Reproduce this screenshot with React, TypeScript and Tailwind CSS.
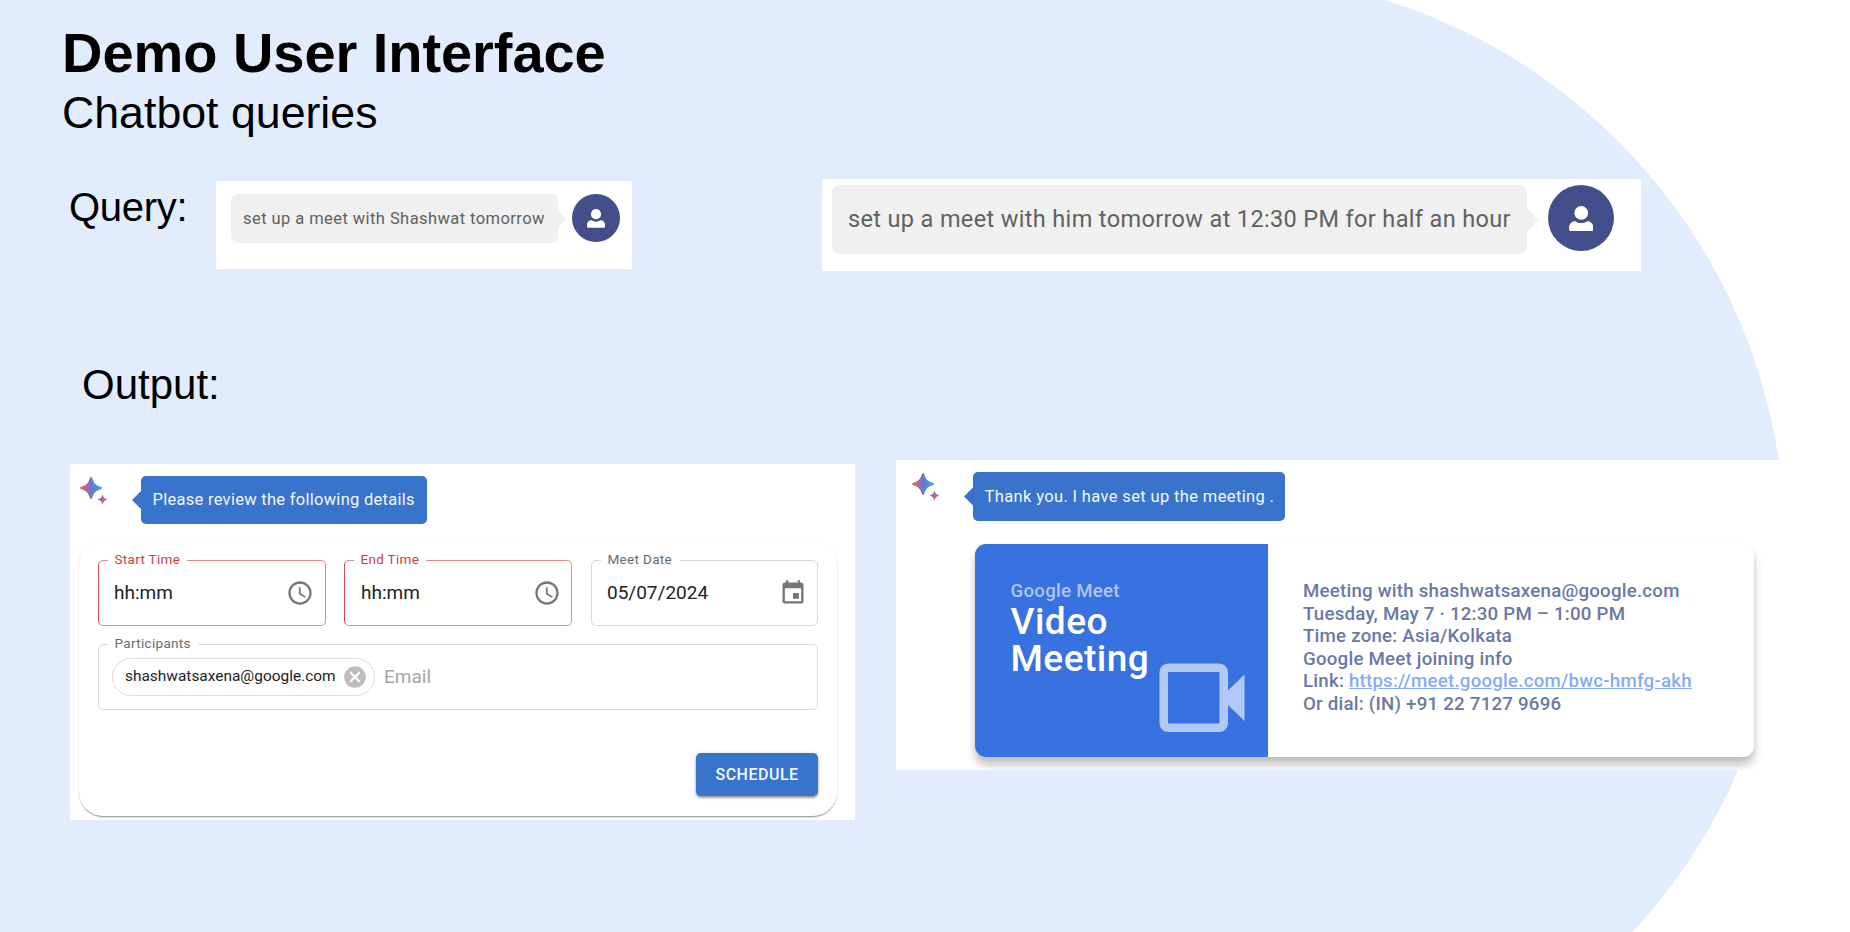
import type { ReactNode } from "react";

function Sparkle({ className, id }: { className: string; id: string }) {
  return (
    <svg className={className} width="28" height="28" viewBox="0 0 28 28" fill="none">
      <defs>
        <linearGradient id={`${id}-a`} x1="0" y1="11" x2="22" y2="11" gradientUnits="userSpaceOnUse">
          <stop offset="0" stopColor="#e5784f" />
          <stop offset="0.3" stopColor="#b0659c" />
          <stop offset="0.55" stopColor="#5c7fd0" />
          <stop offset="1" stopColor="#45a6e8" />
        </linearGradient>
        <linearGradient id={`${id}-b`} x1="17" y1="20" x2="28" y2="26" gradientUnits="userSpaceOnUse">
          <stop offset="0" stopColor="#6d78cf" />
          <stop offset="0.45" stopColor="#b0659c" />
          <stop offset="1" stopColor="#e0714f" />
        </linearGradient>
      </defs>
      <path
        d="M11 0c.9 0 1.1.7 1.5 1.9 1.300 4.200 3.400 6.300 7.600 7.600 1.200.4 1.900.6 1.900 1.500s-.7 1.100-1.900 1.500c-4.200 1.300-6.300 3.400-7.600 7.600-.4 1.200-.6 1.900-1.500 1.900s-1.100-.7-1.500-1.900c-1.300-4.200-3.400-6.300-7.600-7.600C.7 12.100 0 11.900 0 11s.7-1.100 1.900-1.500c4.200-1.300 6.300-3.400 7.600-7.600C9.900.7 10.100 0 11 0z"
        fill={`url(#${id}-a)`}
      />
      <path
        d="M22.500 17.200c.7 2.900 1.700 4.300 5.300 5.300-3.600 1-4.600 2.400-5.300 5.300-.7-2.900-1.700-4.300-5.300-5.300 3.600-1 4.600-2.400 5.300-5.300z"
        fill={`url(#${id}-b)`}
      />
    </svg>
  );
}

function UserIcon({ className }: { className: string }) {
  return (
    <svg className={className} viewBox="0 0 18 19" fill="#ffffff">
      <circle cx="9" cy="5.150" r="5.100" />
      <path d="M4.500 11.300c1.300.9 2.700 1.400 4.500 1.400s3.200-.5 4.500-1.400c2.700 0 4.500 2 4.500 4.700v1.500c0 .7-.5 1.200-1.200 1.200H1.200C.5 18.700 0 18.200 0 17.500V16c0-2.700 1.800-4.700 4.500-4.700z" />
    </svg>
  );
}

function ClockIcon() {
  return (
    <svg className="size-7 shrink-0" viewBox="0 0 24 24" fill="#757575">
      <path d="M11.990 2C6.470 2 2 6.480 2 12s4.470 10 9.990 10C17.520 22 22 17.520 22 12S17.520 2 11.990 2zM12 20c-4.420 0-8-3.580-8-8s3.580-8 8-8 8 3.580 8 8-3.580 8-8 8z" />
      <path d="M12.500 7H11v6l5.250 3.150.75-1.230-4.500-2.670z" />
    </svg>
  );
}

function CalendarIcon() {
  return (
    <svg className="size-7 shrink-0" viewBox="0 0 24 24" fill="#757575">
      <path d="M17 12h-5v5h5v-5zM16 1v2H8V1H6v2H5c-1.110 0-1.990.9-1.990 2L3 19c0 1.100.89 2 2 2h14c1.100 0 2-.9 2-2V5c0-1.100-.9-2-2-2h-1V1h-2zm3 18H5V8h14v11z" />
    </svg>
  );
}

function CancelIcon() {
  return (
    <svg className="size-[26px] shrink-0" viewBox="0 0 24 24" fill="#bdbdbd">
      <path d="M12 2C6.470 2 2 6.470 2 12s4.470 10 10 10 10-4.470 10-10S17.530 2 12 2zm5 13.590L15.590 17 12 13.410 8.410 17 7 15.590 10.590 12 7 8.410 8.410 7 12 10.590 15.590 7 17 8.410 13.410 12 17 15.590z" />
    </svg>
  );
}

function VideocamIcon() {
  return (
    <svg className="absolute left-[184px] top-[119px]" width="86" height="70" viewBox="0 0 86 70">
      <rect x="4.750" y="4.750" width="60" height="60" rx="4.500" fill="none" stroke="#b2c8f6" strokeWidth="8.500" />
      <path d="M69 27.500 85.500 11.500V58L69 42z" fill="#b2c8f6" />
    </svg>
  );
}

function Field({
  className,
  label,
  labelClass,
  children,
}: {
  className: string;
  label: string;
  labelClass: string;
  children: ReactNode;
}) {
  return (
    <div className={`relative flex h-[66px] items-center rounded-[5px] border ${className}`}>
      <span
        className={`absolute -top-[10px] left-[9px] bg-white pl-[6.500px] text-[13.500px] leading-4 tracking-[0.32px] whitespace-nowrap ${labelClass}`}
      >
        {label}
      </span>
      {children}
    </div>
  );
}

function ReplyBubble({ className, children }: { className: string; children: ReactNode }) {
  return (
    <div className="flex items-center">
      <div className="h-[18px] w-[9px] bg-[#3873cc] [clip-path:polygon(100%_0,100%_100%,0_50%)]" />
      <div
        className={`flex items-center rounded-[5px] bg-[#3873cc] pt-px pl-[11.500px] text-[16.500px] whitespace-nowrap text-[#f3f7fd] ${className}`}
      >
        {children}
      </div>
    </div>
  );
}

export default function App() {
  return (
    <div className="relative h-[932px] w-[1850px] overflow-hidden bg-white font-['Roboto',sans-serif]">
      <div className="absolute -top-[26px] left-0 h-[1140px] w-[1785px] rounded-r-full bg-[#e1edfc]" />

      <main className="relative flex h-full flex-col">
        <header className="flex h-[179px] flex-col pt-[21px] pl-[62px] font-['Liberation_Sans',Arial,sans-serif] text-black">
          <h1 className="text-[56px] leading-16 font-bold tracking-[-0.05px]">Demo User Interface</h1>
          <p className="mt-[2px] text-[44.700px] leading-[52px]">Chatbot queries</p>
        </header>

        <section className="flex h-[181px] items-start pl-[69px]">
          <h2 className="w-[147px] pt-[4px] font-['Liberation_Sans',Arial,sans-serif] text-[40px] leading-12 tracking-[-0.3px] text-black">
            Query:
          </h2>
          <div className="mt-[2px] flex h-[88px] w-[415.500px] items-start bg-white pt-[13px] pl-[15px]">
            <div className="flex h-[49px] w-[327px] items-center rounded-md bg-[#f0f0f0] pt-px pl-3 text-[16.500px] tracking-[0.43px] whitespace-nowrap text-[#616161]">
              set up a meet with Shashwat tomorrow
            </div>
            <div className="mt-4 h-[18px] w-2 bg-[#f0f0f0] [clip-path:polygon(0_0,100%_50%,0_100%)]" />
            <div className="ml-[6px] flex size-12 items-center justify-center rounded-full bg-[#424f8a]">
              <UserIcon className="h-[19px] w-[18px]" />
            </div>
          </div>
          <div className="ml-[190.500px] flex h-[92px] w-[819px] items-start bg-white pt-[6px] pl-[9.500px]">
            <div className="flex h-[69px] w-[695.500px] items-center rounded-lg bg-[#f0f0f0] pt-px pl-[16.500px] text-[23.500px] tracking-[0.355px] whitespace-nowrap text-[#616161]">
              set up a meet with him tomorrow at 12:30 PM for half an hour
            </div>
            <div className="mt-[23px] h-6 w-[11px] bg-[#f0f0f0] [clip-path:polygon(0_0,100%_50%,0_100%)]" />
            <div className="ml-[9.500px] flex size-[66px] items-center justify-center rounded-full bg-[#424f8a] pt-px pl-px">
              <UserIcon className="h-[25.500px] w-[24.500px]" />
            </div>
          </div>
        </section>

        <h2 className="h-[100px] pt-px pl-[82px] font-['Liberation_Sans',Arial,sans-serif] text-[42px] leading-12 text-black">
          Output:
        </h2>

        <section className="flex items-start pl-[70px]">
          <div className="mt-[4px] h-[356px] w-[785px] overflow-hidden bg-white pl-[9px]">
            <div className="flex items-start pt-3">
              <Sparkle id="left" className="mt-px mr-6 ml-px" />
              <ReplyBubble className="h-12 w-[286px] tracking-[0.28px]">
                Please review the following details
              </ReplyBubble>
            </div>
            <form className="mt-[17px] flex h-[275px] w-[758px] flex-col rounded-[24px] bg-white pt-[19px] pl-[19px] shadow-[0_2px_1px_-1px_rgba(0,0,0,0.28),0_1px_2px_rgba(0,0,0,0.22)]">
              <div className="flex gap-[18px]">
                <Field
                  className="w-[228px] border-[#dd8d8a] border-l-[#cc524e] pr-[11px] pl-[15px]"
                  label="Start Time"
                  labelClass="w-[79px] text-[#cc403b]"
                >
                  <span className="flex-1 text-[19px] text-[#222222]">hh:mm</span>
                  <ClockIcon />
                </Field>
                <Field
                  className="w-[228px] border-[#dd8d8a] border-l-[#cc524e] pr-[10px] pl-4"
                  label="End Time"
                  labelClass="w-[72px] text-[#cc403b]"
                >
                  <span className="flex-1 text-[19px] text-[#222222]">hh:mm</span>
                  <ClockIcon />
                </Field>
                <Field
                  className="ml-px w-[227px] border-[#d9d9d9] pr-[10px] pl-[15px]"
                  label="Meet Date"
                  labelClass="w-[79px] text-[#6b6b6b]"
                >
                  <span className="flex-1 text-[19px] text-[#222222]">05/07/2024</span>
                  <CalendarIcon />
                </Field>
              </div>
              <Field
                className="mt-[18px] w-[720px] border-[#d9d9d9] pl-[13px]"
                label="Participants"
                labelClass="w-[90px] text-[#6b6b6b]"
              >
                <div className="flex h-[38px] w-[263px] items-center justify-between rounded-full border border-[#dcdcdc] pr-[6px] pl-3 text-[15.450px] text-[#222222]">
                  shashwatsaxena@google.com
                  <CancelIcon />
                </div>
                <span className="ml-[9px] text-[19px] text-[#a6a6a6]">Email</span>
              </Field>
              <button
                type="button"
                className="mt-[43px] ml-[598px] h-[43px] w-[122px] rounded-[5px] bg-[#3873cc] text-[16px] font-medium tracking-[0.5px] text-[#f3f7fd] shadow-[0_2px_2px_rgba(0,0,0,0.3),0_1px_4px_rgba(0,0,0,0.2)]"
              >
                SCHEDULE
              </button>
            </form>
          </div>

          <div className="ml-[41px] h-[310px] w-[889px] overflow-hidden bg-white">
            <div className="flex items-start pt-3 pl-[15px]">
              <Sparkle id="right" className="mt-px mr-6 ml-px" />
              <ReplyBubble className="h-[49px] w-[312px] tracking-[0.36px]">
                Thank you. I have set up the meeting .
              </ReplyBubble>
            </div>
            <article className="mt-[23px] ml-[79px] flex h-[213px] w-[779px] rounded-[11px] bg-white shadow-[0_8px_10px_rgba(0,0,0,0.24),0_2px_4px_rgba(0,0,0,0.04)]">
              <div className="relative w-[293px] rounded-l-[11px] bg-[#3871e0] pt-9 pl-[35.500px]">
                <p className="text-[18.700px] leading-[23px] font-medium tracking-[0.25px] text-[#afc6f4]">
                  Google Meet
                </p>
                <h3 className="text-[37px] leading-[37px] font-medium tracking-[0.5px] text-white">
                  Video
                  <br />
                  Meeting
                </h3>
                <VideocamIcon />
              </div>
              <div className="pt-9 pl-[35px] text-[18.700px] leading-[22.500px] font-medium tracking-[0.22px] whitespace-nowrap text-[#6a79a4]">
                <p>Meeting with shashwatsaxena@google.com</p>
                <p>Tuesday, May 7 · 12:30 PM – 1:00 PM</p>
                <p>Time zone: Asia/Kolkata</p>
                <p>Google Meet joining info</p>
                <p>
                  Link: <span className="text-[#86abf8] underline">https://meet.google.com/bwc-hmfg-akh</span>
                </p>
                <p>Or dial: (IN) +91 22 7127 9696</p>
              </div>
            </article>
          </div>
        </section>
      </main>
    </div>
  );
}
